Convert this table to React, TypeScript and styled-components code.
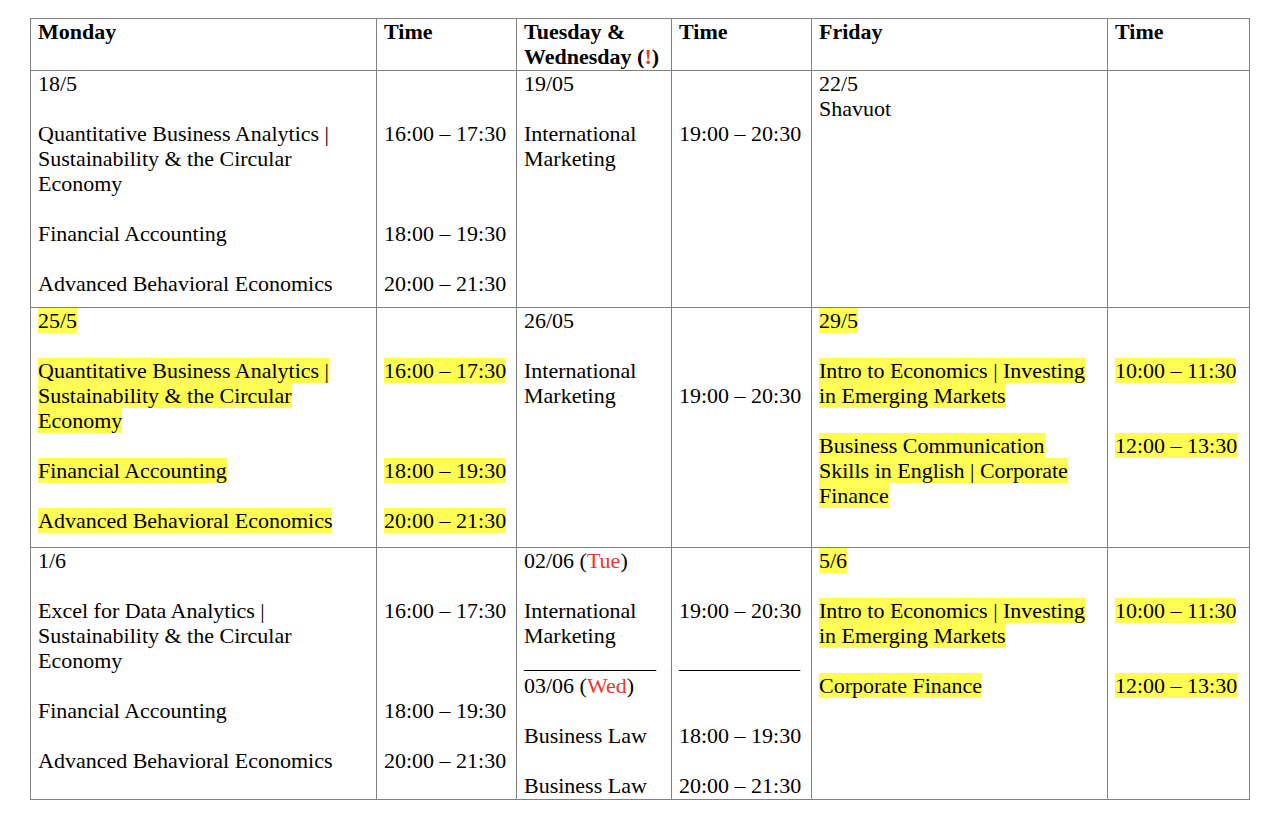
import React from 'react';
import styled, { createGlobalStyle } from 'styled-components';

const GlobalStyle = createGlobalStyle`
  html, body {
    margin: 0;
    padding: 0;
    background: #ffffff;
  }
  body {
    font-family: 'Liberation Serif', 'Times New Roman', serif;
    color: #000000;
  }
`;

const Page = styled.div`
  padding: 18px 0 0 30px;
`;

const Schedule = styled.div`
  display: grid;
  grid-template-columns: 346px 140px 155px 140px 296px 142px;
  grid-template-rows: 52px 237px 240px 252px;
  width: max-content;
  border-top: 1px solid #808080;
  border-left: 1px solid #808080;
`;

const Cell = styled.div<{ $head?: boolean }>`
  box-sizing: border-box;
  padding: 0 7px;
  border-right: 1px solid #808080;
  border-bottom: 1px solid #808080;
  font-size: 22px;
  line-height: 25px;
  font-weight: ${p => (p.$head ? 700 : 400)};
  overflow: hidden;
`;

const Line = styled.div`
  min-height: 25px;
  white-space: pre;
`;

const Mark = styled.span`
  background: #fffd54;
`;

const Red = styled.span`
  color: #e8392b;
`;

type CellData = { lines: React.ReactNode[]; hl?: boolean };

const header: React.ReactNode[][] = [
  ['Monday'],
  ['Time'],
  [
    'Tuesday &',
    <>
      Wednesday (<Red>!</Red>)
    </>,
  ],
  ['Time'],
  ['Friday'],
  ['Time'],
];

const mondayBlock = (first: string, date: string): React.ReactNode[] => [
  date,
  '',
  first,
  'Sustainability & the Circular',
  'Economy',
  '',
  'Financial Accounting',
  '',
  'Advanced Behavioral Economics',
];

const mondayTimes = ['', '', '16:00 – 17:30', '', '', '', '18:00 – 19:30', '', '20:00 – 21:30'];

const rows: CellData[][] = [
  [
    { lines: mondayBlock('Quantitative Business Analytics |', '18/5') },
    { lines: mondayTimes },
    { lines: ['19/05', '', 'International', 'Marketing'] },
    { lines: ['', '', '19:00 – 20:30'] },
    { lines: ['22/5', 'Shavuot'] },
    { lines: [] },
  ],
  [
    { lines: mondayBlock('Quantitative Business Analytics |', '25/5'), hl: true },
    { lines: mondayTimes, hl: true },
    { lines: ['26/05', '', 'International', 'Marketing'] },
    { lines: ['', '', '', '19:00 – 20:30'] },
    {
      lines: [
        '29/5',
        '',
        'Intro to Economics | Investing',
        'in Emerging Markets',
        '',
        'Business Communication',
        'Skills in English | Corporate',
        'Finance',
      ],
      hl: true,
    },
    { lines: ['', '', '10:00 – 11:30', '', '', '12:00 – 13:30'], hl: true },
  ],
  [
    { lines: mondayBlock('Excel for Data Analytics |', '1/6') },
    { lines: mondayTimes },
    {
      lines: [
        <>
          02/06 (<Red>Tue</Red>)
        </>,
        '',
        'International',
        'Marketing',
        '____________',
        <>
          03/06 (<Red>Wed</Red>)
        </>,
        '',
        'Business Law',
        '',
        'Business Law',
      ],
    },
    {
      lines: ['', '', '19:00 – 20:30', '', '___________', '', '', '18:00 – 19:30', '', '20:00 – 21:30'],
    },
    {
      lines: ['5/6', '', 'Intro to Economics | Investing', 'in Emerging Markets', '', 'Corporate Finance'],
      hl: true,
    },
    { lines: ['', '', '10:00 – 11:30', '', '', '12:00 – 13:30'], hl: true },
  ],
];

const CellLines = function (props: CellData) {
  const { lines, hl } = props;
  return (
    <>
      {lines.map((line, i) => (
        <Line key={i}>{line !== '' && hl ? <Mark>{line}</Mark> : line}</Line>
      ))}
    </>
  );
};

const App = function () {
  return (
    <>
      <GlobalStyle />
      <Page>
        <Schedule>
          {header.map((lines, i) => (
            <Cell key={`h${i}`} $head>
              <CellLines lines={lines} />
            </Cell>
          ))}
          {rows.map((row, r) =>
            row.map((cell, c) => (
              <Cell key={`${r}-${c}`}>
                <CellLines lines={cell.lines} hl={cell.hl} />
              </Cell>
            )),
          )}
        </Schedule>
      </Page>
    </>
  );
};

export default App;
